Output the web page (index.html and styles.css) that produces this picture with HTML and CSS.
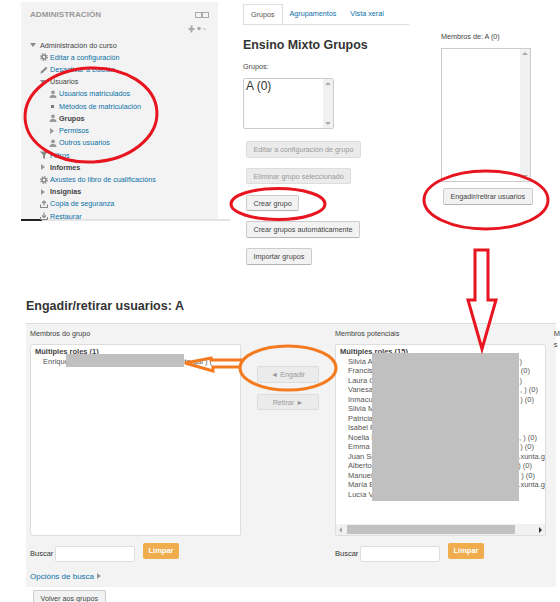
FILE: index.html
```html
<!DOCTYPE html>
<html lang="en">
<head>
    <meta charset="UTF-8">
    <title>Engadir/retirar usuarios</title>
    <link rel="stylesheet" href="styles.css">
</head>
<body>

<!-- Icons used in the administration tree -->
<svg class="defs" width="0" height="0">
    <symbol id="i-gear" viewBox="0 0 8 8">
        <circle cx="4" cy="4" r="2" fill="none" stroke="#888" stroke-width="1.6"/>
        <circle cx="4" cy="4" r="3.4" fill="none" stroke="#888" stroke-width="1.2" stroke-dasharray="1.3 1.37"/>
    </symbol>
    <symbol id="i-pen" viewBox="0 0 8 8">
        <path d="M0.5 7.5L1 5.5L6 0.8L7.4 2.2L2.5 7Z" fill="#888"/>
    </symbol>
    <symbol id="i-user" viewBox="0 0 8 8">
        <circle cx="4" cy="2.3" r="1.9" fill="#999"/>
        <path d="M0.5 8C0.5 5.4 2.6 4.8 4 4.8C5.4 4.8 7.5 5.4 7.5 8Z" fill="#999"/>
    </symbol>
    <symbol id="i-funnel" viewBox="0 0 8 8">
        <path d="M0 0.5H8L5 4V8L3 7V4Z" fill="#888"/>
    </symbol>
    <symbol id="i-upload" viewBox="0 0 8 8">
        <path d="M0.5 4.5V7.5H7.5V4.5M4 5.5V1M2 3L4 1L6 3" fill="none" stroke="#888" stroke-width="1.1"/>
    </symbol>
    <symbol id="i-download" viewBox="0 0 8 8">
        <path d="M0.5 5V7.5H7.5V5M4 0.5V5.5M2 3.5L4 5.5L6 3.5" fill="none" stroke="#888" stroke-width="1.1"/>
    </symbol>
</svg>

<div class="sheet">

    <!-- Top half: the three pasted pieces -->
    <div class="top">
        <div class="admin-wrap">
            <div class="admin">
                <div class="admin-head">
                    <span class="admin-title">ADMINISTRACIÓN</span>
                    <span class="dock"><i></i><i></i></span>
                </div>
                <div class="move">
                    <svg width="18" height="8" viewBox="0 0 18 8">
                        <path d="M3.5 0.5V7.5M0.5 4H6.5" stroke="#aaa" stroke-width="2" fill="none"/>
                        <circle cx="11" cy="3.5" r="1.8" fill="#aaa"/>
                        <path d="M15 4H18" stroke="#bbb" stroke-width="1"/>
                    </svg>
                </div>
                <ul class="tree">
                    <li class="dark"><span class="tri-down"></span>Administración do curso</li>
                    <li class="lvl1"><svg class="ico"><use href="#i-gear"/></svg>Editar a configuración</li>
                    <li class="lvl1"><svg class="ico"><use href="#i-pen"/></svg>Desactivar a edición</li>
                    <li class="lvl1 dark"><span class="tri-down"></span>Usuarios</li>
                    <li class="lvl2"><svg class="ico"><use href="#i-user"/></svg>Usuarios matriculados</li>
                    <li class="lvl2"><span class="dot"></span>Métodos de matriculación</li>
                    <li class="lvl2 strong"><svg class="ico"><use href="#i-user"/></svg>Grupos</li>
                    <li class="lvl2"><span class="tri-right"></span>Permisos</li>
                    <li class="lvl2"><svg class="ico"><use href="#i-user"/></svg>Outros usuarios</li>
                    <li class="lvl1"><svg class="ico"><use href="#i-funnel"/></svg>Filtros</li>
                    <li class="lvl1 strong"><span class="tri-right"></span>Informes</li>
                    <li class="lvl1"><svg class="ico"><use href="#i-gear"/></svg>Axustes do libro de cualificacións</li>
                    <li class="lvl1 strong"><span class="tri-right"></span>Insignias</li>
                    <li class="lvl1"><svg class="ico"><use href="#i-upload"/></svg>Copia de seguranza</li>
                    <li class="lvl1"><svg class="ico"><use href="#i-download"/></svg>Restaurar</li>
                </ul>
            </div>
            <div class="cut-line"></div>
        </div>

        <div class="groups">
            <div class="tabs">
                <span class="tab active">Grupos</span>
                <span class="tab">Agrupamentos</span>
                <span class="tab">Vista xeral</span>
            </div>
            <h2 class="course">Ensino Mixto Grupos</h2>
            <div class="small-label">Grupos:</div>
            <div class="listbox">
                <span>A (0)</span>
                <span class="vbar"><span class="caret-up"></span><span class="caret-down"></span></span>
            </div>
            <div class="group-buttons">
                <span class="btn off">Editar a configuración de grupo</span>
                <span class="btn off">Eliminar grupo seleccionado</span>
                <span class="btn">Crear grupo</span>
                <span class="btn">Crear grupos automáticamente</span>
                <span class="btn">Importar grupos</span>
            </div>
        </div>

        <div class="members">
            <div class="small-label">Membros de: A (0)</div>
            <div class="members-box">
                <span class="vbar"><span class="caret-up"></span><span class="caret-down"></span></span>
            </div>
            <span class="btn members-btn">Engadir/retirar usuarios</span>
        </div>
    </div>

    <!-- Bottom half: add/remove users page -->
    <h2 class="page-title">Engadir/retirar usuarios: A</h2>
    <div class="panel">
        <div class="col">
            <div class="small-label">Membros do grupo</div>
            <div class="userbox">
                <div class="role">Múltiples roles (1)</div>
                <div class="person">Enrique<span class="end-211">nta.gal ) (</span></div>
            </div>
            <div class="search">
                <span>Buscar</span><span class="field"></span><span class="clear">Limpar</span>
            </div>
            <div class="options">Opcións de busca <span class="options-arrow"></span></div>
        </div>
        <div class="mid">
            <span class="btn off wide">◄ Engadir</span>
            <span class="btn off wide">Retirar ►</span>
        </div>
        <div class="col">
            <div class="small-label">Membros potenciais</div>
            <div class="userbox">
                <div class="role">Múltiples roles (15)</div>
                <div class="person">Silvia A<span class="end-521">)</span></div>
                <div class="person">Francis<span class="end-529">) (0)</span></div>
                <div class="person">Laura C<span class="end-521">)</span></div>
                <div class="person">Vanesa<span class="end-537">, ) (0)</span></div>
                <div class="person">Inmacul<span class="end-533">) (0)</span></div>
                <div class="person">Silvia M</div>
                <div class="person">Patricia</div>
                <div class="person">Isabel P</div>
                <div class="person">Noelia I<span class="end-536">, ) (0)</span></div>
                <div class="person">Emma I<span class="end-533">) (0)</span></div>
                <div class="person">Juan Se<span class="end-clip">.xunta.g</span></div>
                <div class="person">Alberto<span class="end-531">) (0)</span></div>
                <div class="person">Manuel<span class="end-534">) (0)</span></div>
                <div class="person">María B<span class="end-clip">.xunta.g</span></div>
                <div class="person">Lucía V</div>
                <div class="hbar">
                    <span class="caret-left"></span>
                    <span class="hbar-thumb"></span>
                    <span class="caret-right"></span>
                </div>
            </div>
            <div class="search">
                <span>Buscar</span><span class="field"></span><span class="clear">Limpar</span>
            </div>
        </div>
        <div class="cutoff">M<br>s</div>
    </div>
    <span class="btn back">Volver aos grupos</span>

    <!-- Redaction blocks and hand drawn marks on top of the screenshot -->
    <div class="redact redact-left"></div>
    <div class="redact redact-right"></div>
    <svg class="marks" width="560" height="602" viewBox="0 0 560 602">
        <g fill="none" stroke="#e8141f" stroke-width="3">
            <ellipse cx="91" cy="115" rx="66" ry="47" transform="rotate(-3 91 115)"/>
            <ellipse cx="278" cy="204" rx="47" ry="15.5"/>
            <ellipse cx="486" cy="200" rx="62" ry="29"/>
            <path d="M475 250H488V300H496L482 349L468 300H475Z"/>
        </g>
        <g fill="none" stroke="#f47a20" stroke-width="3">
            <ellipse cx="288" cy="368" rx="48" ry="22"/>
            <path d="M242 360H211V358L185 363L213 371V367H240"/>
        </g>
    </svg>
</div>

</body>
</html>
```

FILE: styles.css
```css
body {
    margin: 0;
    background-color: #fff;
    font-family: 'Liberation Sans', sans-serif;
    color: #333;
}

.defs {
    position: absolute;
}

.sheet {
    position: relative;
    width: 560px;
    height: 602px;
    overflow: hidden;
}

.top {
    display: flex;
    height: 290px;
}

/* Administration block */
.admin-wrap {
    width: 197px;
    margin: 2px 0 0 21px;
}

.admin {
    box-sizing: border-box;
    height: 217px;
    padding: 8px 9px 0;
    background-color: #f3f3f3;
}

.admin-head {
    display: flex;
    justify-content: space-between;
    align-items: center;
}

.admin-title {
    font-size: 8.1px;
    line-height: 10px;
    font-weight: bold;
    color: #999;
}

.dock {
    display: flex;
}

.dock i {
    width: 5px;
    height: 4px;
    border: 1px solid #aaa;
}

.move {
    display: flex;
    justify-content: flex-end;
    align-items: center;
    height: 10px;
    margin-top: 4px;
    padding-right: 3px;
}

.tree {
    list-style: none;
    margin: 5px 0 0;
    padding: 0;
    font-size: 7.2px;
    color: #0a70a6;
}

.tree li {
    display: flex;
    align-items: center;
    height: 12.22px;
    white-space: nowrap;
}

.tree .lvl1 {
    padding-left: 10px;
}

.tree .lvl2 {
    padding-left: 19px;
}

.tree .dark {
    color: #444;
}

.tree .strong {
    font-weight: bold;
    color: #444;
}

.ico {
    flex: none;
    width: 8px;
    height: 8px;
    margin-right: 2px;
}

.tri-down {
    flex: none;
    border: 3px solid transparent;
    border-top: 4px solid #888;
    border-bottom: 0;
    margin-right: 4px;
}

.tri-right {
    flex: none;
    border: 3px solid transparent;
    border-left: 4px solid #999;
    border-right: 0;
    margin: 0 5px 0 1px;
}

.dot {
    flex: none;
    width: 3px;
    height: 3px;
    margin: 0 5px 0 2px;
    background-color: #777;
}

.cut-line {
    width: 209px;
    height: 2px;
    background: linear-gradient(to right, #222 21px, #e4e4e4 21px);
}

/* Groups column */
.groups {
    width: 166px;
    margin-left: 25px;
}

.tabs {
    display: flex;
    height: 20px;
    margin-top: 4px;
    border-bottom: 1px solid #ddd;
    font-size: 7.2px;
    line-height: 20px;
    color: #0a70a6;
}

.tab {
    padding: 0 7px;
}

.tab.active {
    color: #555;
    background-color: #fff;
    border: 1px solid #ddd;
    border-bottom: 0;
}

.course {
    margin: 11px 0 0;
    font-size: 12.4px;
    line-height: 18px;
    color: #333;
}

.small-label {
    font-size: 7.2px;
    line-height: 10px;
    color: #444;
}

.groups .small-label {
    margin-top: 8px;
}

.listbox {
    position: relative;
    box-sizing: border-box;
    width: 91px;
    height: 51px;
    margin-top: 6px;
    padding: 1px 2px;
    border: 1px solid #ccc;
    border-radius: 2px;
    font-size: 12px;
    line-height: 13px;
}

.vbar {
    position: absolute;
    top: 0;
    right: 0;
    bottom: 0;
    display: flex;
    flex-direction: column;
    justify-content: space-between;
    align-items: center;
    box-sizing: border-box;
    width: 10px;
    padding: 3px 0;
    background-color: #f1f1f1;
}

.caret-up {
    border: 3px solid transparent;
    border-bottom: 3px solid #aaa;
    border-top: 0;
}

.caret-down {
    border: 3px solid transparent;
    border-top: 3px solid #aaa;
    border-bottom: 0;
}

.group-buttons {
    display: flex;
    flex-direction: column;
    align-items: flex-start;
    gap: 10.3px;
    margin: 12px 0 0 3px;
}

.btn {
    display: inline-block;
    box-sizing: border-box;
    padding: 0 6.5px;
    height: 16.5px;
    font-size: 7.2px;
    line-height: 15px;
    color: #444;
    white-space: nowrap;
    background-color: #f2f2f2;
    border: 1px solid #ccc;
    border-bottom-color: #b3b3b3;
    border-radius: 2px;
}

.btn.off {
    color: #999;
    background-color: #ebebeb;
    border-color: #ddd;
}

/* Members column */
.members {
    margin-left: 32px;
    padding-top: 32px;
}

.members-box {
    position: relative;
    box-sizing: border-box;
    width: 90px;
    height: 134px;
    margin-top: 6px;
    border: 1px solid #ccc;
}

.members-btn {
    margin: 6px 0 0 2px;
}

/* Add / remove users */
.page-title {
    margin: 8px 0 0 26px;
    font-size: 12.5px;
    line-height: 16px;
    color: #333;
}

.panel {
    display: flex;
    position: relative;
    box-sizing: border-box;
    width: 530px;
    height: 264px;
    margin: 9px 0 0 26px;
    padding: 5px 0 0 4px;
    background-color: #f3f3f3;
    border-top: 1px solid #ddd;
    font-size: 7.5px;
}

.col {
    width: 211px;
}

.userbox {
    position: relative;
    box-sizing: border-box;
    height: 192px;
    margin-top: 5px;
    padding: 2px 0 1px 4px;
    background-color: #fff;
    border: 1px solid #ddd;
    border-radius: 2px;
    overflow: hidden;
}

.role {
    font-weight: bold;
    font-size: 7.5px;
    line-height: 9.5px;
    color: #444;
}

.person {
    display: flex;
    justify-content: space-between;
    padding-left: 8px;
    line-height: 9.5px;
    color: #555;
    white-space: nowrap;
}

/* Leftovers of the blurred e-mails, by the x where they stop */
.end-211 {
    margin-right: 28px;
}

.end-521 {
    margin-right: 23px;
}

.end-529 {
    margin-right: 15px;
}

.end-531 {
    margin-right: 13px;
}

.end-533 {
    margin-right: 11px;
}

.end-534 {
    margin-right: 10px;
}

.end-536 {
    margin-right: 8px;
}

.end-537 {
    margin-right: 7px;
}

.end-clip {
    margin-right: 0;
}

.hbar {
    position: absolute;
    left: 0;
    right: 0;
    bottom: 0;
    display: flex;
    align-items: center;
    box-sizing: border-box;
    height: 11px;
    padding: 0 3px;
    background-color: #f1f1f1;
}

.hbar-thumb {
    width: 168px;
    height: 9px;
    margin: 0 auto 0 5px;
    background-color: #c1c1c1;
}

.caret-left {
    border: 3px solid transparent;
    border-right: 3px solid #aaa;
    border-left: 0;
}

.caret-right {
    border: 3px solid transparent;
    border-left: 3px solid #333;
    border-right: 0;
}

.search {
    display: flex;
    align-items: flex-start;
    margin-top: 7px;
    height: 19px;
}

.search > span:first-child {
    width: 25px;
    padding-top: 6px;
}

.field {
    box-sizing: border-box;
    width: 80px;
    height: 16px;
    margin-top: 3px;
    background-color: #fff;
    border: 1px solid #ddd;
    border-radius: 2px;
}

.clear {
    width: 36px;
    height: 16px;
    margin-left: 8px;
    line-height: 16px;
    font-weight: bold;
    text-align: center;
    color: #fff;
    background-color: #f0ad4e;
    border-radius: 2px;
}

.options {
    margin-top: 10px;
    font-size: 8px;
    color: #0a70a6;
}

.options-arrow {
    display: inline-block;
    margin-left: 1px;
    border: 3px solid transparent;
    border-left: 4px solid #999;
    border-right: 0;
}

.mid {
    display: flex;
    flex-direction: column;
    box-sizing: border-box;
    width: 94px;
    padding: 37px 0 0 16px;
    gap: 11px;
}

.wide {
    width: 62px;
    padding: 0;
    text-align: center;
}

.cutoff {
    position: absolute;
    top: 4px;
    right: -4px;
    font-size: 7.5px;
    line-height: 11px;
    color: #444;
}

.back {
    margin: 3px 0 0 33px;
}

/* Overlays */
.redact {
    position: absolute;
    background-color: #c0c0c0;
}

.redact-left {
    left: 66px;
    top: 354px;
    width: 118px;
    height: 13px;
}

.redact-right {
    left: 372px;
    top: 353px;
    width: 147px;
    height: 148px;
}

.marks {
    position: absolute;
    left: 0;
    top: 0;
}
```
